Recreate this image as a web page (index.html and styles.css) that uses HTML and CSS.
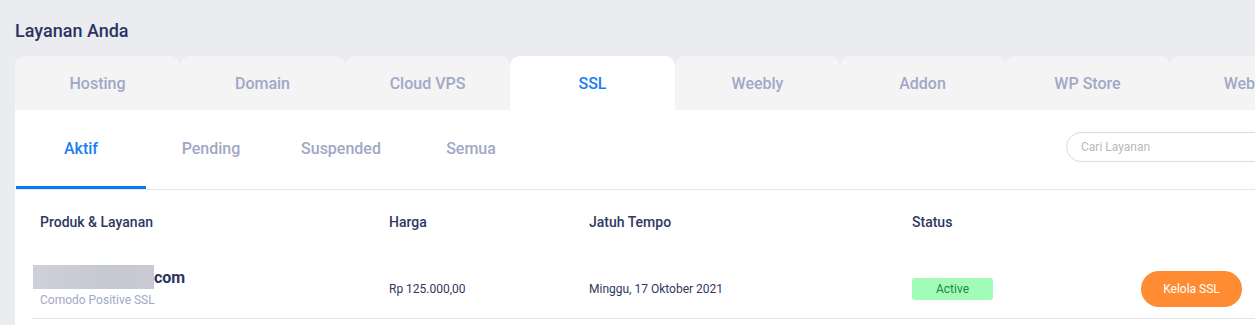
FILE: index.html
```html
<!DOCTYPE html>
<html lang="id">
<head>
<meta charset="utf-8">
<title>Layanan Anda</title>
<link rel="stylesheet" href="styles.css">
</head>
<body>
<div class="page">
  <h1 class="title">Layanan Anda</h1>
  <nav class="tabs">
    <div class="tab">Hosting</div>
    <div class="tab">Domain</div>
    <div class="tab">Cloud VPS</div>
    <div class="tab active">SSL</div>
    <div class="tab">Weebly</div>
    <div class="tab">Addon</div>
    <div class="tab">WP Store</div>
    <div class="tab">Website</div>
  </nav>
  <section class="panel">
    <div class="subbar">
      <div class="subtabs">
        <div class="subtab active">Aktif</div>
        <div class="subtab">Pending</div>
        <div class="subtab">Suspended</div>
        <div class="subtab">Semua</div>
      </div>
      <div class="search">
        <input class="search-input" type="text" placeholder="Cari Layanan">
      </div>
    </div>
    <div class="table">
      <div class="thead">
        <div class="th">Produk &amp; Layanan</div>
        <div class="th">Harga</div>
        <div class="th">Jatuh Tempo</div>
        <div class="th">Status</div>
        <div class="th"></div>
      </div>
      <div class="trow">
        <div class="td product">
          <div class="domain"><span class="blur"></span><span class="tld">com</span></div>
          <div class="plan">Comodo Positive SSL</div>
        </div>
        <div class="td small">Rp 125.000,00</div>
        <div class="td small">Minggu, 17 Oktober 2021</div>
        <div class="td"><span class="badge">Active</span></div>
        <div class="td"><button class="btn">Kelola SSL</button></div>
      </div>
    </div>
  </section>
</div>
</body>
</html>
```

FILE: styles.css
```css
* { box-sizing: border-box; }
html, body {
  margin: 0;
  padding: 0;
  background: #ebecf0;
  overflow: hidden;
}
body {
  font-family: Roboto, "Liberation Sans", Arial, sans-serif;
  color: #2b3460;
}
.page {
  width: 1400px;
  padding: 20px 0 0 15px;
}
.title {
  margin: 0;
  font-size: 18px;
  font-weight: 500;
  line-height: 22px;
  color: #2b3460;
}
.tabs {
  display: flex;
  margin-top: 14px;
}
.tab {
  width: 165px;
  height: 54px;
  flex: none;
  display: flex;
  align-items: center;
  justify-content: center;
  background: #f4f4f5;
  border-radius: 10px 10px 0 0;
  font-size: 16px;
  font-weight: 500;
  color: #a1a8c6;
}
.tab.active {
  background: #ffffff;
  color: #1a7df5;
}
.panel {
  width: 1320px;
  background: #ffffff;
  padding-bottom: 40px;
}
.subbar {
  display: flex;
  height: 80px;
  padding-left: 1px;
  border-bottom: 1px solid #e6e6e9;
}
.subtabs {
  display: flex;
}
.subtab {
  width: 130px;
  display: flex;
  align-items: center;
  justify-content: center;
  font-size: 16px;
  font-weight: 500;
  color: #a1a8c6;
  border-bottom: 3px solid transparent;
}
.subtab.active {
  color: #1a7df5;
  border-bottom-color: #0a78f5;
}
.search {
  margin-left: 530px;
  padding-top: 22px;
}
.search-input {
  width: 240px;
  height: 30px;
  border: 1px solid #dcdcdf;
  border-radius: 15px;
  padding: 0 14px;
  font-family: Roboto, "Liberation Sans", Arial, sans-serif;
  font-size: 12px;
  color: #555;
  outline: none;
  background: #fff;
}
.search-input::placeholder { color: #b9b9bd; }
.table {
  margin-left: 17px;
}
.thead, .trow {
  display: grid;
  grid-template-columns: 349px 200px 323px 229px 120px;
}
.thead {
  height: 64px;
  align-items: center;
}
.th {
  padding-left: 8px;
  font-size: 14px;
  font-weight: 500;
  color: #2f3863;
}
.trow {
  height: 65px;
  padding-top: 6px;
  align-items: center;
  border-bottom: 1px solid #e6e6e9;
}
.td {
  padding-left: 8px;
}
.td.small {
  font-size: 12px;
  color: #2f3863;
}
.product {
  align-self: start;
  padding-left: 1px;
  margin-top: 5px;
}
.domain {
  display: flex;
  align-items: center;
  height: 24px;
}
.blur {
  display: inline-block;
  width: 121px;
  height: 24px;
  background: linear-gradient(90deg, #cfd0d9, #c6c8d2 60%, #c9cad3);
  filter: blur(0.6px);
}
.tld {
  font-size: 16px;
  font-weight: 700;
  color: #2b3460;
}
.plan {
  margin-top: 3px;
  padding-left: 7px;
  font-size: 12px;
  color: #a1a8c6;
  line-height: 16px;
}
.badge {
  display: inline-flex;
  align-items: center;
  justify-content: center;
  width: 81px;
  height: 22px;
  border-radius: 3px;
  background: #a3fbb8;
  color: #1a8a3c;
  font-size: 12px;
  font-weight: 400;
}
.btn {
  width: 101px;
  height: 36px;
  border: none;
  border-radius: 18px;
  background: #ff8c33;
  color: #ffffff;
  font-family: Roboto, "Liberation Sans", Arial, sans-serif;
  font-size: 12px;
  margin-top: -1px;
}
```
